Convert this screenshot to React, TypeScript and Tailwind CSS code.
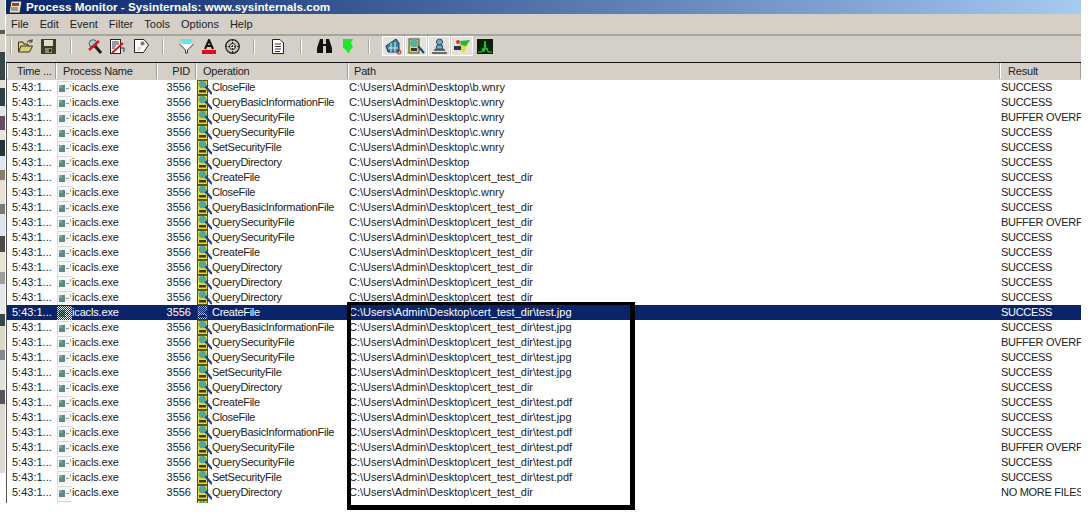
import React from "react";

const P = "C:\\Users\\Admin\\Desktop\\";
const D = P + "cert_test_dir";
const BO = "BUFFER OVERFLOW";
const S = "SUCCESS";
const QB = "QueryBasicInformationFile";
const QS = "QuerySecurityFile";
const SS = "SetSecurityFile";
const QD = "QueryDirectory";
const CF = "CreateFile";
const CL = "CloseFile";
const rows: [string, string, string][] = [
  [CL, P + "b.wnry", S],
  [QB, P + "c.wnry", S],
  [QS, P + "c.wnry", BO],
  [QS, P + "c.wnry", S],
  [SS, P + "c.wnry", S],
  [QD, "C:\\Users\\Admin\\Desktop", S],
  [CF, D, S],
  [CL, P + "c.wnry", S],
  [QB, D, S],
  [QS, D, BO],
  [QS, D, S],
  [CF, D, S],
  [QD, D, S],
  [QD, D, S],
  [QD, D, S],
  [CF, D + "\\test.jpg", S],
  [QB, D + "\\test.jpg", S],
  [QS, D + "\\test.jpg", BO],
  [QS, D + "\\test.jpg", S],
  [SS, D + "\\test.jpg", S],
  [QD, D, S],
  [CF, D + "\\test.pdf", S],
  [CL, D + "\\test.jpg", S],
  [QB, D + "\\test.pdf", S],
  [QS, D + "\\test.pdf", BO],
  [QS, D + "\\test.pdf", S],
  [SS, D + "\\test.pdf", S],
  [QD, D, "NO MORE FILES"],
  [CL, D, S],
];

const strip: [number, string][] = [
  [30, "#d8d6ce"], [4, "#5a5a5a"], [18, "#d8d4c8"], [28, "#37474a"], [8, "#e6dfd0"], [18, "#2f4044"],
  [10, "#dfe4ea"], [14, "#6a4a60"], [10, "#e8e4d8"], [16, "#26343a"], [14, "#dfe8f0"], [10, "#8a7a6a"],
  [24, "#e6e2d8"], [10, "#7a7a70"], [22, "#dde6ee"], [16, "#4a4a48"], [20, "#e8e4d4"], [12, "#a0a09a"],
  [30, "#e4e8e8"], [12, "#38464a"], [24, "#ddd8c8"], [10, "#888"], [30, "#e2e2dc"], [14, "#555"], [69, "#dcdad2"],
];

function ExeIcon({ sel }: { sel: boolean }) {
  return (
    <svg width="15" height="14" viewBox="0 0 15 14" className="shrink-0 ml-px">
      <rect x="0" y="0" width="15" height="14" fill="#f6f8f8" />
      <path d="M0 0.5 H15 M0.5 0 V14" stroke="#d3d9dd" />
      <rect x="2" y="4" width="6" height="7" fill="#5d8a86" />
      <rect x="2" y="4" width="3" height="3" fill="#7fa6a0" />
      <rect x="9" y="7" width="3" height="1" fill="#8a9aa0" />
      <rect x="13" y="3" width="1" height="3" fill="#9aa5aa" />
      {sel && <rect width="15" height="14" fill="url(#seldither)" />}
    </svg>
  );
}

function FsIcon({ sel }: { sel: boolean }) {
  return (
    <svg width="15" height="15" viewBox="0 0 15 15" className="shrink-0 ml-px">
      <rect x="0.5" y="0.5" width="10" height="14" fill="#e6d93c" stroke="#55550f" />
      <circle cx="5.5" cy="4.5" r="3.8" fill="#4fa79e" />
      <rect x="2" y="10" width="7" height="2.5" fill="#3a3a10" />
      <path d="M9 7 L15 14" stroke="#1c3f8f" strokeWidth="2.2" />
      <path d="M8 8 L11 5" stroke="#1c3f8f" strokeWidth="1.4" />
      {sel && <rect width="15" height="15" fill="url(#seldither)" />}
    </svg>
  );
}

function Toolbar() {
  const sep = "w-0.5 h-[15px] bg-[#a9a69d] border-r border-white shrink-0";
  return (
    <div className="flex items-center h-[26px] pb-[4px] bg-[#d4d0c8] border-t-2 border-t-[#a8a59e] box-border shrink-0">
      <div className={`${sep} ml-[4px]`} />
      {/* open */}
      <svg width="15" height="14" viewBox="0 0 15 14" className="ml-[6px]">
        <path d="M0.5 13 V3 H5 L6 5 H10 V7 M0.5 13 L3 7 H14.5 L11.5 13 Z" fill="#d9cf7a" stroke="#33331a" />
        <path d="M9 3 Q11 0 14 2 M14 0 V3 H11" fill="none" stroke="#333" />
      </svg>
      {/* save */}
      <svg width="15" height="15" viewBox="0 0 15 15" className="ml-[8px]">
        <rect width="15" height="15" fill="#3a3e2a" />
        <rect x="3" y="1" width="9" height="6" fill="#dcdcc8" />
        <rect x="4" y="9" width="7" height="5" fill="#8b8b72" />
        <rect x="8" y="10" width="2" height="3" fill="#2a2a1a" />
      </svg>
      <div className={`${sep} ml-[14px]`} />
      {/* capture */}
      <svg width="15" height="15" viewBox="0 0 15 15" className="ml-[15px]">
        <circle cx="6" cy="4.5" r="3.8" fill="#a9d3d6" stroke="#555" />
        <path d="M8 7 L14 14" stroke="#222" strokeWidth="3" />
        <path d="M2 11 L12 2" stroke="#d8141c" strokeWidth="2.4" />
      </svg>
      {/* autoscroll */}
      <svg width="15" height="15" viewBox="0 0 15 15" className="ml-[8px]">
        <rect x="0.5" y="0.5" width="10" height="14" fill="#fff" stroke="#222" />
        <path d="M2 3 H9 M2 5 H9 M2 7 H6 M2 9 H5" stroke="#333" />
        <path d="M2 14 L13 4" stroke="#d8141c" strokeWidth="2" />
        <path d="M10 9 H14 V13" fill="none" stroke="#333" />
      </svg>
      {/* clear */}
      <svg width="15" height="14" viewBox="0 0 15 14" className="ml-[9px]">
        <path d="M0.5 0.5 H10 L14.5 6 L9.5 13.5 H0.5 Z" fill="#fff" stroke="#222" />
        <path d="M6 4 L9 2 L11 5 L8 7 Z" fill="#777" />
        <path d="M3 9 H8 M3 11 H6" stroke="#bbb" />
      </svg>
      <div className={`${sep} ml-[13px]`} />
      {/* filter */}
      <svg width="15" height="15" viewBox="0 0 15 15" className="ml-[15px]">
        <path d="M0 0 H15 L9 6 H6 Z" fill="#5fe6ee" />
        <path d="M0.5 5 L6.5 11 V14 H8.5 V11 L14.5 5" fill="#fff" stroke="#333" />
      </svg>
      {/* highlight */}
      <svg width="14" height="15" viewBox="0 0 14 15" className="ml-[8px]">
        <path d="M3 10 L7 1 L11 10 M4.5 7 H9.5" fill="none" stroke="#111" strokeWidth="2" />
        <rect x="0" y="11" width="14" height="4" fill="#e40b12" />
      </svg>
      {/* target */}
      <svg width="15" height="15" viewBox="0 0 15 15" className="ml-[9px]">
        <circle cx="7.5" cy="7.5" r="6.8" fill="#c9c6bd" stroke="#222" strokeWidth="1.3" />
        <circle cx="7.5" cy="7.5" r="3" fill="#e8e6e0" stroke="#222" />
        <path d="M7.5 0 V15 M0 7.5 H15" stroke="#222" strokeDasharray="2 1" />
      </svg>
      <div className={`${sep} ml-[13px]`} />
      {/* properties */}
      <svg width="12" height="15" viewBox="0 0 12 15" className="ml-[17px]">
        <path d="M0.5 0.5 H8 L11.5 4 V14.5 H0.5 Z" fill="#fff" stroke="#222" />
        <path d="M3 5 H9 M3 7.5 H9 M3 10 H9 M3 12.5 H8" stroke="#333" />
      </svg>
      <div className={`${sep} ml-[16px]`} />
      {/* find */}
      <svg width="15" height="14" viewBox="0 0 15 14" className="ml-[15px]">
        <path d="M3 0 H6 V5 H9 V0 H12 L15 9 V14 H9 V7 H6 V14 H0 V9 Z" fill="#111" />
      </svg>
      {/* jump */}
      <svg width="10" height="15" viewBox="0 0 10 15" className="ml-[11px]">
        <path d="M0 0 H10 L8 4 L10 8 L7 11 L6 15 L2 10 L0 9 Z" fill="#1ee62a" />
      </svg>
      <div className={`${sep} ml-[15px]`} />
      {/* toggles */}
      <div className="flex ml-[12px] gap-px">
        {[0, 1, 2, 3].map((i) => (
          <div key={i} className="w-[22px] h-[20px] border border-white bg-[#e4e2dc] flex items-center justify-center">
            {i === 0 && (
              <svg width="17" height="17" viewBox="0 0 17 17">
                <path d="M1 8 L11 1 L14 5 L14 14 L3 14 Z" fill="#3f7f9a" stroke="#1d3b5a" />
                <path d="M3 10 H13 M6 5 V14 M10 4 V14" stroke="#d8eef0" />
                <circle cx="14" cy="14" r="2" fill="none" stroke="#c02020" />
              </svg>
            )}
            {i === 1 && (
              <svg width="17" height="17" viewBox="0 0 17 17">
                <rect x="1" y="1" width="10" height="14" fill="#e8d83a" stroke="#444" />
                <circle cx="6" cy="5" r="4" fill="#55b0a6" />
                <rect x="3" y="10" width="6" height="3" fill="#333" />
                <path d="M10 8 L16 15" stroke="#1c3f8f" strokeWidth="2" />
              </svg>
            )}
            {i === 2 && (
              <svg width="17" height="17" viewBox="0 0 17 17">
                <circle cx="8.5" cy="4" r="3" fill="#5fb6cc" stroke="#345" />
                <path d="M6 7 H11 L12 11 H5 Z" fill="#5fb6cc" stroke="#345" />
                <path d="M1 15 H16 M3 12 H14" stroke="#444" strokeWidth="1.5" />
              </svg>
            )}
            {i === 3 && (
              <svg width="18" height="17" viewBox="0 0 18 17">
                <path d="M6 5 L17 2 L11 15 L7 12 Z" fill="#e8d83a" />
                <path d="M7 3 L17 2 L13 8 L8 7 Z" fill="#22b34a" />
                <circle cx="5" cy="4" r="2" fill="#d83a2a" />
                <rect x="1" y="8" width="7" height="4" fill="#334" />
              </svg>
            )}
          </div>
        ))}
      </div>
      <svg width="16" height="15" viewBox="0 0 16 15" className="ml-[4px]">
        <rect width="16" height="15" fill="#06210c" />
        <path d="M1 13 H5 L6 9 L7 13 L8 2 L9 11 L10 9 L11 13 H15" fill="none" stroke="#1fe02f" />
      </svg>
    </div>
  );
}

const cols = ["w-[49px]", "w-[101px]", "w-[39px]", "w-[152px]", "w-[652px]", "w-[81px]"];
const headers = ["Time ...", "Process Name", "PID", "Operation", "Path", "Result"];
const headerPad = ["pl-[9px]", "pl-[6px]", "justify-end pr-[5px]", "pl-[6px]", "pl-[5px]", "pl-[7px]"];

export default function App() {
  return (
    <div className="w-[1092px] h-[512px] bg-white overflow-hidden relative flex font-['Liberation_Sans',sans-serif] text-[11px] text-[#222]">
      <svg width="0" height="0" className="absolute">
        <defs>
          <pattern id="seldither" width="2" height="2" patternUnits="userSpaceOnUse">
            <rect x="0" y="0" width="1" height="1" fill="#0a246a" />
            <rect x="1" y="1" width="1" height="1" fill="#0a246a" />
          </pattern>
        </defs>
      </svg>
      <div className="w-[6px] h-[503px] shrink-0 flex flex-col overflow-hidden">
        {strip.map(([h, c], i) => (
          <div key={i} className="w-[5px] shrink-0" style={{ height: h, backgroundColor: c }} />
        ))}
      </div>
      <div className="w-[1075px] h-[503px] overflow-hidden flex flex-col">
        <div className="h-[14px] shrink-0 flex items-center pl-[2px] bg-gradient-to-r from-[#0a246a] to-[#a6caf0] text-white font-bold text-[11.7px]">
          <svg width="15" height="13" viewBox="0 0 15 13" className="shrink-0">
            <path d="M3 0 H14 L12 12 H1 Z" fill="#e8e4d0" stroke="#222" />
            <rect x="4" y="2" width="7" height="3" fill="#b0382a" />
            <path d="M3 7 H10 M3 9 H10" stroke="#555" />
          </svg>
          <span className="ml-[3px] leading-none whitespace-nowrap">Process Monitor - Sysinternals: www.sysinternals.com</span>
        </div>
        <div className="h-[20px] shrink-0 bg-[#d4d0c8] flex items-center pl-[5px] gap-[11px]">
          {["File", "Edit", "Event", "Filter", "Tools", "Options", "Help"].map((m) => (
            <span key={m}>{m}</span>
          ))}
        </div>
        <Toolbar />
        <div className="h-[2px] shrink-0 bg-[#d4d0c8]" />
        <div className="flex-1 min-h-0 flex flex-col border-l border-l-[#555] border-t border-t-[#111]">
          <div className="flex h-[17px] shrink-0 bg-[#d4d0c8] tracking-[-0.2px]">
            {headers.map((h, i) => (
              <div
                key={h}
                className={`${cols[i]} shrink-0 h-[16px] flex items-center border-l border-l-white border-r border-r-[#a09d95] ${headerPad[i]}`}
              >
                {h}
              </div>
            ))}
          </div>
          <div className="flex-1 min-h-0 overflow-hidden bg-white">
            {rows.map((r, i) => {
              const sel = i === 15;
              return (
                <div key={i} className={`flex h-[15px] items-center whitespace-nowrap ${sel ? "bg-[#0a246a] text-white" : ""}`}>
                  <div className={`${cols[0]} shrink-0 pl-[5px]`}>5:43:1...</div>
                  <div className={`${cols[1]} shrink-0 flex items-center`}>
                    <ExeIcon sel={sel} />
                    <span className="tracking-[-0.15px]">icacls.exe</span>
                  </div>
                  <div className={`${cols[2]} shrink-0 text-right pr-[5px]`}>3556</div>
                  <div className={`${cols[3]} shrink-0 flex items-center`}>
                    <FsIcon sel={sel} />
                    <span className="tracking-[-0.3px]">{r[0]}</span>
                  </div>
                  <div className={`${cols[4]} shrink-0 pl-px`}>{r[1]}</div>
                  <div className={`${cols[5]} shrink-0 overflow-hidden pl-px tracking-[-0.3px]`}>{r[2]}</div>
                </div>
              );
            })}
          </div>
        </div>
      </div>
      <div className="absolute left-[347px] top-[302px] w-[288px] h-[208px] border-[4px] border-t-[3px] border-r-[5px] border-b-[5px] border-black" />
    </div>
  );
}
